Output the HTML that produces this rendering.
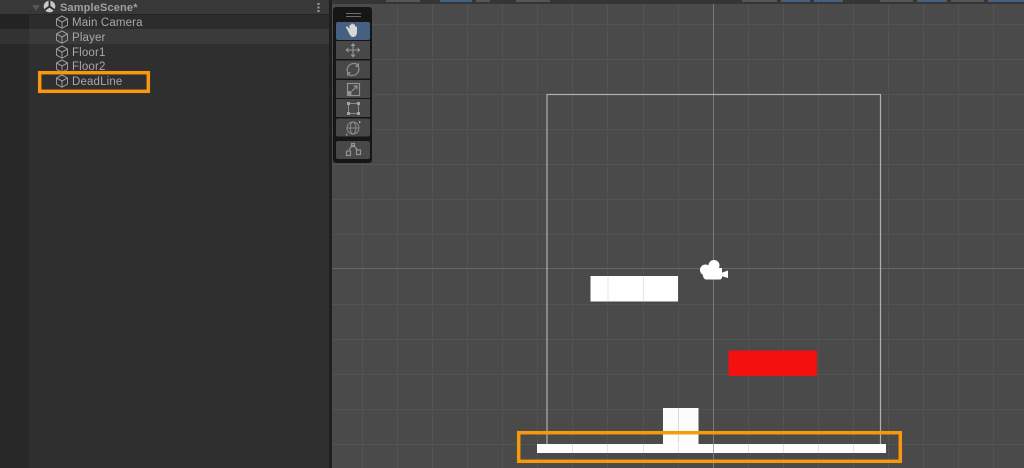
<!DOCTYPE html>
<html><head><meta charset="utf-8"><style>
html,body{margin:0;padding:0;background:#4a4a4a}
body{width:1024px;height:468px;overflow:hidden;position:relative}
svg{position:absolute;left:0;top:0;display:block;filter:blur(.35px)}
text{font-family:"Liberation Sans",sans-serif;font-size:11.500px;fill:#a8a8a8;letter-spacing:.15px}
</style></head><body>
<svg width="1024" height="468" viewBox="0 0 1024 468" xmlns="http://www.w3.org/2000/svg">
<defs>
<g id="cube" fill="none" stroke="#9a9a9a" stroke-width="1" stroke-linejoin="round"><path d="M0 -6L5.500 -3V3.200L0 6.200L-5.500 3.200V-3Z"/><path d="M-5.500 -3L0 0L5.500 -3M0 0V6.200"/></g>
</defs>
<!-- left panel -->
<rect width="331" height="468" fill="#2f2f2f"/>
<rect width="29" height="468" fill="#282828"/>
<rect width="331" height="14" fill="#383838"/>
<rect x="0" y="14" width="331" height="1" fill="#242424"/>
<rect x="0" y="15" width="29" height="14" fill="#232323"/>
<rect x="29" y="15" width="301" height="14" fill="#2c2c2c"/>
<rect x="0" y="29" width="29" height="15" fill="#323232"/>
<rect x="29" y="29" width="301" height="15" fill="#3a3a3a"/>
<rect x="329" y="0" width="3" height="468" fill="#1f1f1f"/>
<!-- hierarchy -->
<path d="M32 5H40L36 11Z" fill="#555"/>
<circle cx="49.500" cy="6.500" r="5.800" fill="#c8c8c8"/>
<path d="M49.500 6.500L49.500 1M49.500 6.500L44.500 10M49.500 6.500L54.500 10" stroke="#2c2c2c" stroke-width="1.800"/>
<text x="60" y="11" style="font-weight:bold;fill:#a0a0a0;font-size:11px">SampleScene*</text>
<rect x="317.500" y="3" width="2" height="2" fill="#a0a0a0"/><rect x="317.500" y="6.500" width="2" height="2" fill="#a0a0a0"/><rect x="317.500" y="10" width="2" height="2" fill="#a0a0a0"/>
<use href="#cube" x="62" y="22"/><text x="72" y="26">Main Camera</text>
<use href="#cube" x="62" y="37"/><text x="72" y="41">Player</text>
<use href="#cube" x="62" y="52"/><text x="72" y="56">Floor1</text>
<use href="#cube" x="62" y="66"/><text x="72" y="70">Floor2</text>
<use href="#cube" x="62" y="81"/><text x="72" y="85">DeadLine</text>
<rect x="39.700" y="72.700" width="108.600" height="18.600" fill="none" stroke="#f7980f" stroke-width="3.500"/>
<!-- scene top -->
<rect x="332" y="0" width="692" height="4" fill="#353535"/>
<rect x="386" y="0" width="34" height="2" fill="#555"/><rect x="440" y="0" width="32" height="2" fill="#46607f"/><rect x="476" y="0" width="14" height="2" fill="#555"/><rect x="516" y="0" width="34" height="2" fill="#555"/>
<rect x="742" y="0" width="35" height="2" fill="#555"/><rect x="781" y="0" width="29" height="2" fill="#46607f"/><rect x="814" y="0" width="29" height="2" fill="#46607f"/><rect x="880" y="0" width="33" height="2" fill="#555"/><rect x="917" y="0" width="30" height="2" fill="#46607f"/><rect x="951" y="0" width="33" height="2" fill="#555"/><rect x="988" y="0" width="36" height="2" fill="#46607f"/>
<!-- grid -->
<g stroke="#535353" stroke-width="1">
<path d="M362.500 4V468M397.500 4V468M432.500 4V468M467.500 4V468M502.500 4V468M537.500 4V468M572.500 4V468M607.500 4V468M643.500 4V468M678.500 4V468M748.500 4V468M783.500 4V468M818.500 4V468M853.500 4V468M888.500 4V468M923.500 4V468M958.500 4V468M993.500 4V468"/>
<path d="M332 24.500H1024M332 59.500H1024M332 129.500H1024M332 164.500H1024M332 199.500H1024M332 234.500H1024M332 304.500H1024M332 339.500H1024M332 374.500H1024M332 409.500H1024M332 444.500H1024"/>
</g>
<path d="M332 94.500H1024" stroke="#555" stroke-width="1"/>
<path d="M332 268.500H1024" stroke="#666" stroke-width="1"/>
<path d="M713.500 4V468" stroke="#7c7c7c" stroke-width="1"/>
<!-- camera frame -->
<rect x="547" y="94.500" width="333.500" height="355" fill="none" stroke="#b0b0b0" stroke-width="1.200"/>
<!-- objects -->
<rect x="590.500" y="276" width="87.500" height="25.500" fill="#fff"/>
<path d="M608 276V301M643.500 276V301" stroke="#e6e6e6"/>
<rect x="728.500" y="350.500" width="88.500" height="25.500" fill="#f51010"/>
<rect x="663" y="408" width="35.500" height="36" fill="#fbfdfb"/>
<path d="M678.500 408V443" stroke="#d8dcd8"/>
<rect x="537" y="444" width="349" height="9" fill="#fff"/>
<path d="M572.500 444V453M607.500 444V453M643.500 444V453M678.500 444V453M748.500 444V453M783.500 444V453M818.500 444V453M853.500 444V453" stroke="#e4e4e4"/>
<path d="M713.500 444V453" stroke="#aaa"/>
<!-- camera gizmo -->
<g fill="#fff"><circle cx="705.500" cy="270" r="5.500"/><circle cx="714" cy="265.500" r="5.500"/><path d="M703 268H722V277C722 278.500 721 279.500 719.500 279.500H706C704.500 279.500 703.500 278 703 276Z"/><path d="M721 273L728 270.500V278L721 276Z"/></g>
<!-- orange bottom -->
<rect x="518.700" y="432.700" width="381.600" height="28.600" fill="none" stroke="#f7980f" stroke-width="3.500"/>
<!-- toolbar -->
<rect x="333" y="7" width="39" height="156" rx="3" fill="#161616"/>
<path d="M346 13.500H361M346 16.500H361" stroke="#6e6e6e" stroke-width="1"/>
<rect x="336" y="22" width="34" height="18" rx="2" fill="#46607f"/>
<rect x="336" y="41" width="34" height="18" fill="#484848"/>
<rect x="336" y="60.500" width="34" height="18" fill="#484848"/>
<rect x="336" y="80" width="34" height="18" fill="#484848"/>
<rect x="336" y="99" width="34" height="18" fill="#484848"/>
<rect x="336" y="118.500" width="34" height="18" rx="2" fill="#484848"/>
<rect x="336" y="141" width="34" height="18" rx="2" fill="#484848"/>
<!-- hand -->
<path d="M348 31L346 27.500C345.800 26.500 347 26 347.700 26.800L349.500 29V25.500C349.500 24.500 351 24.500 351.200 25.500V24.300C351.200 23.300 353 23.300 353 24.300V25C353.200 24 355 24 355 25V27C355.400 26 357 26.200 357 27.200V32C357 35 355.500 37 353 37C350.500 37 349.500 34 348 31Z" fill="#d8d8d8"/>
<!-- move -->
<g fill="none" stroke="#8c8c8c" stroke-width="1.300"><path d="M353 46V54M349 50H357"/></g>
<g fill="#9a9a9a"><path d="M353 43L355.500 46H350.500Z"/><path d="M353 57.500L355.500 54.500H350.500Z"/><path d="M345.500 50L348.500 47.500V52.500Z"/><path d="M360.500 50L357.500 47.500V52.500Z"/></g>
<!-- rotate -->
<g fill="none" stroke="#8e8e8e" stroke-width="1.300"><path d="M347.500 72C346 67 350 63.500 354 63.500C355.500 63.500 357 64 358 65"/><path d="M358.500 67C360 72 356 75.500 352 75.500C350.500 75.500 349 75 348 74"/></g>
<path d="M359 62.500V67H355Z M347 76.500V72H351Z" fill="#8e8e8e"/>
<!-- scale -->
<g fill="none" stroke="#929292" stroke-width="1.200"><rect x="347.500" y="83.500" width="12" height="12"/><path d="M352 91L357 86M353.500 86H357V89.500"/></g>
<rect x="347" y="91" width="4.500" height="4.500" fill="#929292"/>
<!-- rect tool -->
<g fill="none" stroke="#8a8a8a" stroke-width="1"><rect x="348.500" y="103.500" width="10" height="10"/></g>
<g fill="#a4a4a4"><rect x="347" y="102" width="3" height="3"/><rect x="357" y="102" width="3" height="3"/><rect x="347" y="112" width="3" height="3"/><rect x="357" y="112" width="3" height="3"/></g>
<!-- transform -->
<g fill="none" stroke="#8c8c8c" stroke-width="1"><circle cx="353" cy="128" r="6"/><ellipse cx="353" cy="128" rx="2.800" ry="6"/><path d="M347 128H359"/></g>
<path d="M359 120.500L361 122.500L359 123.500Z M346 135.500V133L348 135.500Z" fill="#a0a0a0"/>
<!-- custom -->
<g fill="none" stroke="#929292" stroke-width="1.200"><path d="M349 150L352 145.500H354L357.500 150"/><rect x="346.500" y="151" width="4" height="4.500"/><rect x="356.500" y="150" width="4" height="4.500"/><rect x="351.500" y="143.500" width="3" height="3"/></g>
</svg>
</body></html>
